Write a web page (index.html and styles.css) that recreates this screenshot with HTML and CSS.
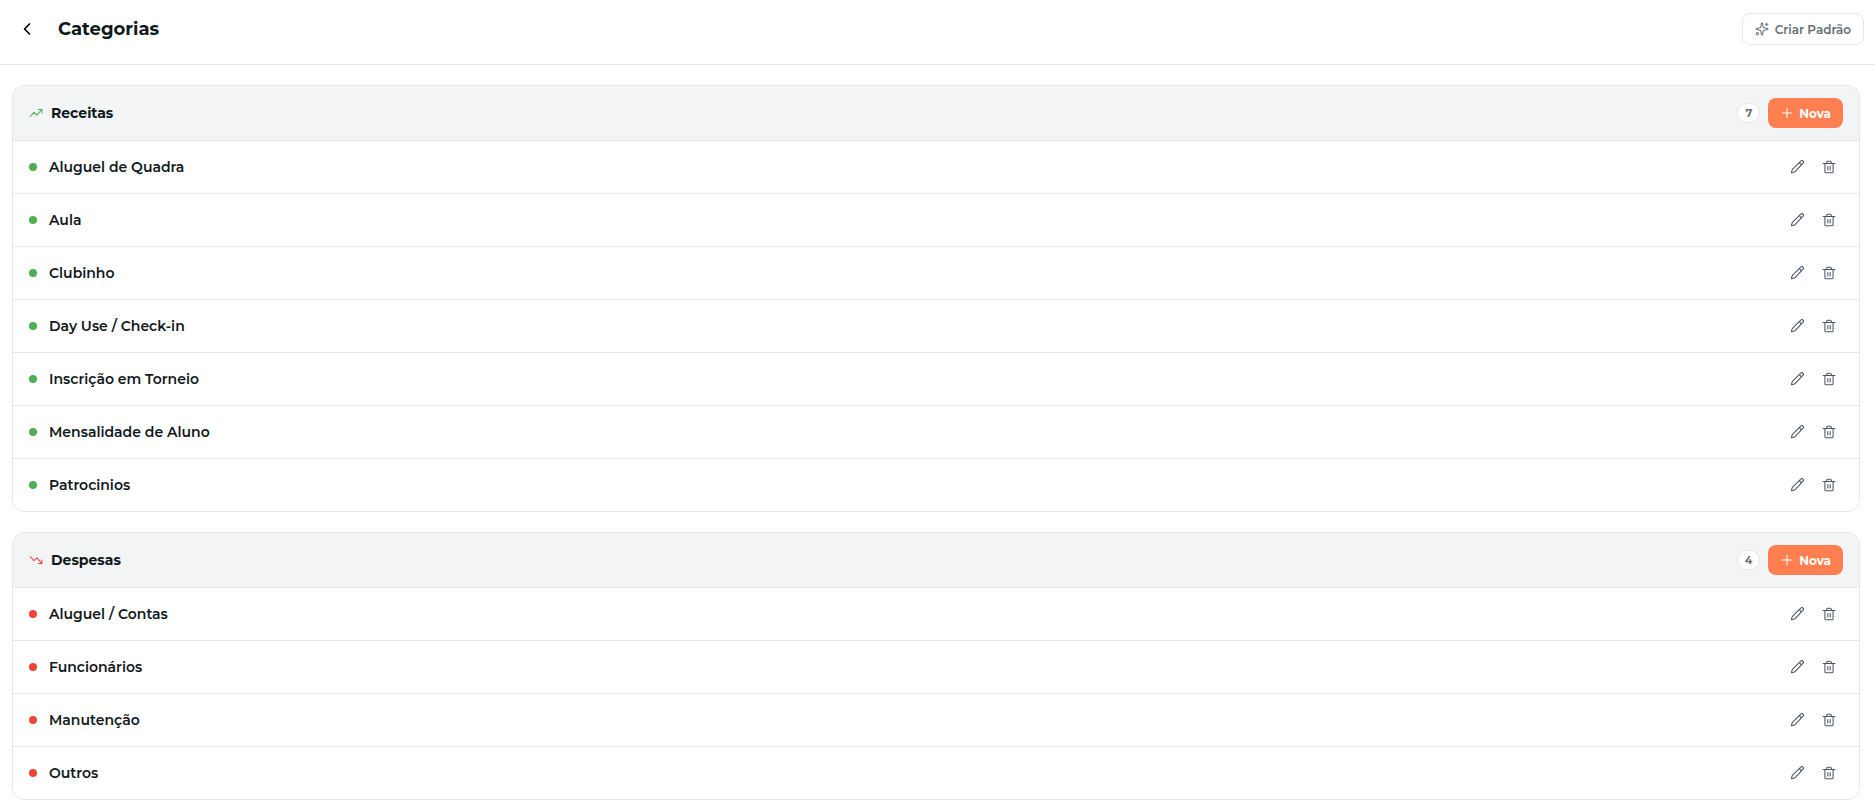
FILE: index.html
```html
<!DOCTYPE html>
<html lang="pt-BR">
<head>
  <meta charset="UTF-8" />
  <meta name="viewport" content="width=device-width, initial-scale=1" />
  <title>Categorias</title>
  <link rel="stylesheet" href="styles.css">
</head>
<body>
  <svg class="sprite" aria-hidden="true">
    <symbol id="icon-back" viewBox="0 0 24 24"><path d="m15 18-6-6 6-6" /></symbol>
    <symbol id="icon-sparkles" viewBox="0 0 24 24">
      <path d="M11 2.8a1 1 0 0 1 2 0l1 5.6a2 2 0 0 0 1.6 1.6l5.6 1a1 1 0 0 1 0 2l-5.6 1a2 2 0 0 0-1.6 1.6l-1 5.6a1 1 0 0 1-2 0l-1-5.6a2 2 0 0 0-1.6-1.6l-5.6-1a1 1 0 0 1 0-2l5.6-1a2 2 0 0 0 1.6-1.6z" />
      <path d="M20 2v4M22 4h-4" />
      <circle cx="4" cy="20" r="2" />
    </symbol>
    <symbol id="icon-up" viewBox="0 0 24 24"><path d="M16 6h6v6" /><path d="m22 6-8.5 9.5-5-4.5L2 18" /></symbol>
    <symbol id="icon-down" viewBox="0 0 24 24"><path d="M16 18h6v-6" /><path d="m22 18-8.5-9.5-5 4.5L2 6" /></symbol>
    <symbol id="icon-plus" viewBox="0 0 24 24"><path d="M4 12h16M12 4v16" /></symbol>
    <symbol id="icon-pencil" viewBox="0 0 24 24">
      <path d="M22.300 5.500a2.600 2.600 0 0 0-3.800-3.700L4.500 15.500a3 3 0 0 0-.8 1.400L2.500 21.300a.5.5 0 0 0 .6.600L7.300 20.600a3 3 0 0 0 1.400-.8z" />
      <path d="m16 4.500 3.700 3.700" />
    </symbol>
    <symbol id="icon-trash" viewBox="0 0 24 24">
      <path d="M2 6h20M19 6v14a2 2 0 0 1-2 2H7a2 2 0 0 1-2-2V6M8 6V4a2 2 0 0 1 2-2h4a2 2 0 0 1 2 2v2" />
      <path d="M10 11v6M14 11v6" />
    </symbol>
  </svg>

  <header class="topbar">
    <button class="back" type="button" aria-label="Voltar"><svg class="icon icon-lg"><use href="#icon-back" /></svg></button>
    <h1>Categorias</h1>
    <button class="btn btn-outline" type="button"><svg class="icon"><use href="#icon-sparkles" /></svg>Criar Padrão</button>
  </header>

  <main class="content" id="content"></main>

  <script>
    const groups = [
      {
        title: "Receitas",
        type: "income",
        icon: "up",
        items: ["Aluguel de Quadra", "Aula", "Clubinho", "Day Use / Check-in", "Inscrição em Torneio", "Mensalidade de Aluno", "Patrocinios"]
      },
      {
        title: "Despesas",
        type: "expense",
        icon: "down",
        items: ["Aluguel / Contas", "Funcionários", "Manutenção", "Outros"]
      }
    ];

    function icon(name) {
      return `<svg class="icon"><use href="#icon-${name}" /></svg>`;
    }

    function renderItem(name) {
      return `
        <li class="row">
          <span class="dot"></span>
          <span class="name">${name}</span>
          <div class="actions">
            <button class="icon-btn" type="button" aria-label="Editar ${name}">${icon("pencil")}</button>
            <button class="icon-btn" type="button" aria-label="Excluir ${name}">${icon("trash")}</button>
          </div>
        </li>`;
    }

    function renderGroup(group) {
      return `
        <section class="card ${group.type}">
          <div class="card-header">
            ${icon(group.icon)}
            <h2>${group.title}</h2>
            <span class="count">${group.items.length}</span>
            <button class="btn btn-primary" type="button">${icon("plus")}Nova</button>
          </div>
          <ul class="list">${group.items.map(renderItem).join("")}</ul>
        </section>`;
    }

    document.getElementById("content").innerHTML = groups.map(renderGroup).join("");
  </script>
</body>
</html>
```
FILE: styles.css
```css
* {
  box-sizing: border-box;
}
body {
  margin: 0;
  background: #fff;
  color: #11181c;
  font-family: Montserrat, Inter, sans-serif;
  font-size: 14px;
}
h1, h2, ul {
  margin: 0;
  padding: 0;
}
button {
  font-family: inherit;
  cursor: pointer;
}
.sprite {
  display: none;
}
.icon {
  width: 14px;
  height: 14px;
  flex: none;
  fill: none;
  stroke: currentColor;
  stroke-width: 1.8;
  stroke-linecap: round;
  stroke-linejoin: round;
}
.icon-lg {
  width: 20px;
  height: 20px;
  stroke-width: 2;
}

/* top bar */
.topbar {
  display: flex;
  align-items: center;
  gap: 16px;
  padding: 13px 10px 19px 12px;
  border-bottom: 1px solid #e4e7eb;
}
.topbar h1 {
  flex: 1;
  font-size: 18px;
  line-height: 24px;
  font-weight: 700;
}
.back {
  display: flex;
  align-items: center;
  justify-content: center;
  width: 30px;
  height: 30px;
  padding: 0;
  border: none;
  background: none;
  color: #000;
}
.btn {
  display: flex;
  align-items: center;
  gap: 5px;
  padding: 0 12px;
  border: none;
  border-radius: 8px;
}
.btn-outline {
  gap: 6px;
  height: 32px;
  border: 1px solid #e4e7eb;
  background: #fff;
  color: #687076;
  font-size: 12px;
  font-weight: 600;
}
.btn-primary {
  height: 30px;
  background: #ff7f50;
  color: #fff;
  font-size: 12px;
  font-weight: 700;
}

/* category groups */
.content {
  display: flex;
  flex-direction: column;
  gap: 20px;
  padding: 20px 14px 10px 12px;
}
.card {
  overflow: hidden;
  border: 1px solid #e4e7eb;
  border-radius: 12px;
}
.card-header {
  display: flex;
  align-items: center;
  gap: 8px;
  padding: 12px 16px;
  border-bottom: 1px solid #e4e7eb;
  background: #f2f4f6;
}
.card-header h2 {
  flex: 1;
  font-size: 14px;
  line-height: 20px;
  font-weight: 700;
}
.income > .card-header > .icon {
  color: #4caf50;
}
.expense > .card-header > .icon {
  color: #f44336;
}
.count {
  min-width: 22px;
  padding: 0 7px;
  border: 1px solid #e4e7eb;
  border-radius: 10px;
  background: #fff;
  color: #687076;
  font-size: 11px;
  line-height: 18px;
  font-weight: 700;
  text-align: center;
}
.list {
  list-style: none;
}
.row {
  display: flex;
  align-items: center;
  gap: 12px;
  padding: 12px 16px;
}
.row + .row {
  border-top: 1px solid #e4e7eb;
}
.dot {
  width: 8px;
  height: 8px;
  border-radius: 50%;
}
.income .dot {
  background: #4caf50;
}
.expense .dot {
  background: #f44336;
}
.name {
  flex: 1;
  font-weight: 600;
}
.actions {
  display: flex;
  gap: 4px;
}
.icon-btn {
  display: flex;
  align-items: center;
  justify-content: center;
  width: 28px;
  height: 28px;
  padding: 0;
  border: none;
  background: none;
  color: #4b5563;
}
```
